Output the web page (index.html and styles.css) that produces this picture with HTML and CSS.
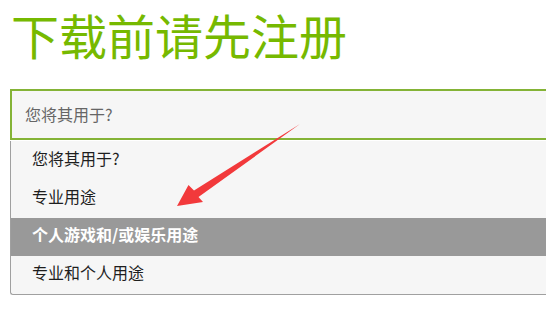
FILE: index.html
```html
<!DOCTYPE html>
<html lang="zh">
<head>
<meta charset="utf-8">
<link rel="stylesheet" href="styles.css">
</head>
<body>
<div class="page">
  <h1 class="title">下载前请先注册</h1>
  <div class="select">您将其用于?</div>
  <ul class="options">
    <li class="option">您将其用于?</li>
    <li class="option">专业用途</li>
    <li class="option active">个人游戏和/或娱乐用途</li>
    <li class="option">专业和个人用途</li>
  </ul>
  <svg class="arrow" width="546" height="319" viewBox="0 0 546 319">
    <polygon points="300,124 194,190.5 188.5,185 177,206 203,202 198.5,197" fill="#f2393b"/>
  </svg>
</div>
</body>
</html>
```
FILE: styles.css
```css
html, body {
  margin: 0;
  padding: 0;
  background: #ffffff;
  overflow: hidden;
}
.page {
  position: relative;
  width: 546px;
  height: 319px;
  padding-left: 10px;
  box-sizing: border-box;
  font-family: "Noto Sans CJK SC", "Noto Sans", sans-serif;
}
.title {
  margin: 0;
  padding-top: 6px;
  padding-left: 1px;
  height: 89px;
  box-sizing: border-box;
  font-size: 48px;
  line-height: 56px;
  font-weight: normal;
  color: #76b900;
}
.select {
  width: 560px;
  height: 51px;
  box-sizing: border-box;
  border: 2px solid #84b336;
  border-right: none;
  background: #f6f6f6;
  padding-left: 13px;
  font-size: 16px;
  line-height: 47px;
  color: #666666;
}
.options {
  list-style: none;
  margin: 1px 0 0 0;
  padding: 1px 0 0 0;
  width: 560px;
  box-sizing: border-box;
  background: #f6f6f6;
  border-left: 1px solid #a0a0a0;
  border-bottom: 1px solid #a0a0a0;
  border-bottom-left-radius: 3px;
}
.option {
  height: 38px;
  line-height: 32px;
  padding-left: 21px;
  font-size: 16px;
  color: #1e1e1e;
}
.option.active {
  background: #999999;
  color: #ffffff;
  font-weight: bold;
}
.arrow {
  position: absolute;
  left: 0;
  top: 0;
  pointer-events: none;
}
```
